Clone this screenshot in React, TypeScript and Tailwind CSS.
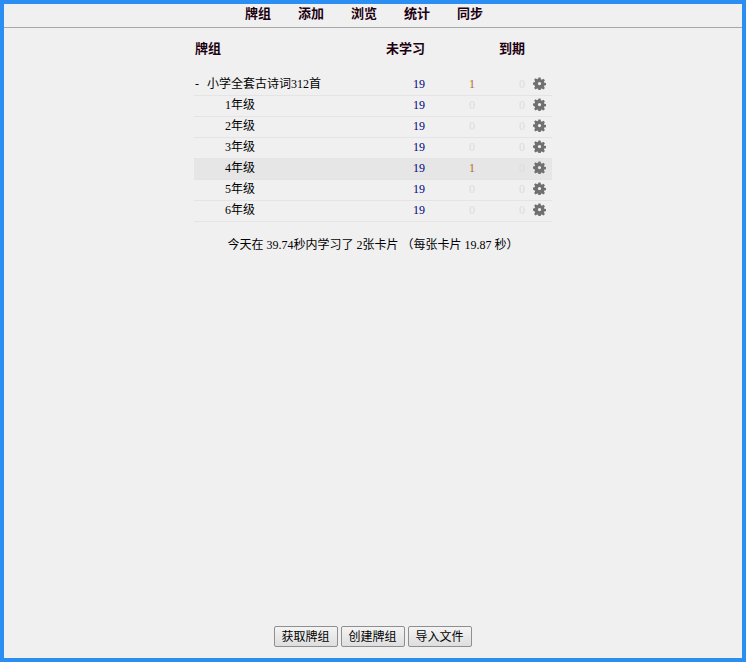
const rows = [
  { name: '小学全套古诗词312首', top: true, learn: 1 },
  { name: '1年级', learn: 0 },
  { name: '2年级', learn: 0 },
  { name: '3年级', learn: 0 },
  { name: '4年级', learn: 1, active: true },
  { name: '5年级', learn: 0 },
  { name: '6年级', learn: 0 },
];

function Gear() {
  return (
    <svg viewBox="0 0 24 24" className="w-[13px] h-[13px] text-[#707070]" fill="currentColor">
      <path
        fillRule="evenodd"
        d="M10 1h4l.6 3.2 1.900.8L19.200 3.100l2.800 2.800-1.900 2.700.8 1.900 3.100.5v4l-3.100.6-.8 1.900 1.900 2.700-2.800 2.800-2.700-1.900-1.900.8-.6 3.100h-4l-.6-3.100-1.900-.8-2.700 1.900-2.800-2.800 1.900-2.700-.8-1.900L0 14v-4l3.100-.5.8-1.900L2 4.900l2.800-2.800L7.500 4l1.900-.8L10 1zm2 8a3 3 0 1 0 0 6 3 3 0 0 0 0-6z"
      />
    </svg>
  );
}

export default function App() {
  return (
    <div className="h-[662px] border-4 border-[#2b8ef3] bg-[#f0f0f0] flex flex-col font-['Liberation_Serif','Noto_Sans_CJK_SC',serif] text-[12px] text-black">
      <div className="h-[24px] shrink-0 border-b border-[#a8a8a8] flex items-center gap-[27px] pl-[241px] pb-[3px] font-bold text-[13px] text-[#200010]">
        <span>牌组</span>
        <span>添加</span>
        <span>浏览</span>
        <span>统计</span>
        <span>同步</span>
      </div>

      <div className="w-[358px] ml-[190px] flex-1">
        <div className="flex items-center h-[42px] font-bold text-[13px] text-[#200010] mb-[5px] pl-px">
          <span className="w-[191px]">牌组</span>
          <span className="w-[39px] text-right whitespace-nowrap">未学习</span>
          <span className="w-[100px] text-right">到期</span>
        </div>
        {rows.map(row => (
          <div
            key={row.name}
            className={`flex items-center h-[21px] pb-[3px] border-b border-[#e4e4e4] ${row.active ? 'bg-[#e6e6e6]' : ''}`}
          >
            <span className={`flex-1 whitespace-nowrap ${row.top ? 'pl-px' : 'pl-[31px]'}`}>
              {row.top && <span className="inline-block w-[12px]">-</span>}
              {row.name}
            </span>
            <span className="w-[30px] text-right text-[#000080]">19</span>
            <span className={`w-[50px] text-right ${row.learn ? 'text-[#b07020]' : 'text-[#dcdcdc]'}`}>{row.learn}</span>
            <span className="w-[50px] text-right text-[#dcdcdc]">0</span>
            <span className="w-[27px] flex justify-center pl-[1px]">
              <Gear />
            </span>
          </div>
        ))}
        <div className="mt-[15px] text-center whitespace-nowrap leading-[16px]">
          今天在 39.74秒内学习了 2张卡片 （每张卡片 19.87 秒）
        </div>
      </div>

      <div className="flex justify-center gap-[3px] mb-[11px] pr-[1px] shrink-0">
        {['获取牌组', '创建牌组', '导入文件'].map(label => (
          <button
            key={label}
            className="h-[21px] w-[64px] text-[12px] leading-none border border-[#8f8f8f] rounded-[2px] bg-gradient-to-b from-[#f4f4f4] to-[#dedede]"
          >
            {label}
          </button>
        ))}
      </div>
    </div>
  );
}
